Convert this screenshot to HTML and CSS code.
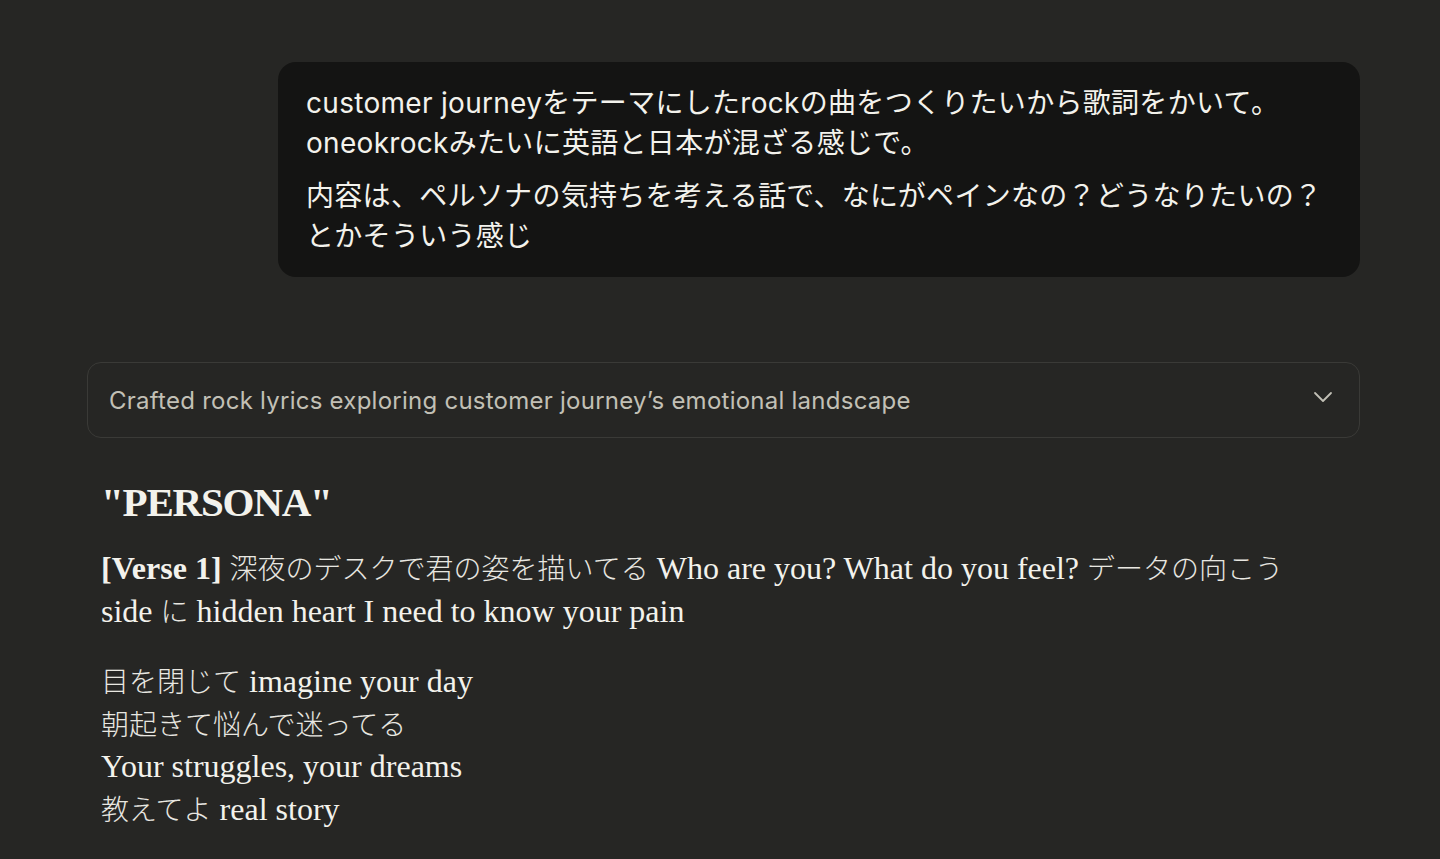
FILE: index.html
```html
<!DOCTYPE html>
<html lang="ja">
<head>
<meta charset="utf-8">
<title>PERSONA</title>
<link rel="stylesheet" href="styles.css">
</head>
<body>
<main class="thread">
  <div class="user-row">
    <div class="bubble">
      <p>customer journeyをテーマにしたrockの曲をつくりたいから歌詞をかいて。<br>oneokrockみたいに英語と日本が混ざる感じで。</p>
      <p>内容は、ペルソナの気持ちを考える話で、なにがペインなの？どうなりたいの？とかそういう感じ</p>
    </div>
  </div>

  <div class="summary">
    <span class="summary-text">Crafted rock lyrics exploring customer journey’s emotional landscape</span>
    <svg class="chevron" width="20" height="12" viewBox="0 0 20 12" aria-hidden="true">
      <path d="M2 2 L10 10 L18 2" fill="none" stroke="#c2c0b6" stroke-width="1.8" stroke-linecap="round" stroke-linejoin="round"/>
    </svg>
  </div>

  <article class="response">
    <h1 class="title">"PERSONA"</h1>
    <p class="lyric"><strong>[Verse 1]</strong> <span class="ja">深夜のデスクで君の姿を描いてる</span> Who are you? What do you feel? <span class="ja">データの向こう</span> side <span class="ja">に</span> hidden heart I need to know your pain</p>
    <p class="lyric"><span class="ja">目を閉じて</span> imagine your day<br><span class="ja">朝起きて悩んで迷ってる</span><br>Your struggles, your dreams<br><span class="ja">教えてよ</span> real story</p>
  </article>
</main>
</body>
</html>
```

FILE: styles.css
```css
html, body {
  margin: 0;
  padding: 0;
  background: #262624;
  height: 100%;
  overflow: hidden;
}

.thread {
  width: 1273px;
  margin-left: 87px;
  padding-top: 62px;
  box-sizing: border-box;
}

.user-row {
  display: flex;
  justify-content: flex-end;
}

.bubble {
  max-width: 85%;
  box-sizing: border-box;
  width: 1082px;
  background: #141413;
  border-radius: 18px;
  padding: 21px 28px 21px 28px;
  color: #f3f2ec;
  font-family: "Inter", "Noto Sans CJK JP", sans-serif;
  font-size: 28px;
  line-height: 40px;
  letter-spacing: 0.3px;
}

.bubble p {
  margin: 0;
}

.bubble p + p {
  margin-top: 13px;
}

.summary {
  margin-top: 85px;
  height: 76px;
  box-sizing: border-box;
  border: 1px solid #3a3a37;
  border-radius: 14px;
  padding: 0 26px 0 21px;
  display: flex;
  align-items: center;
  justify-content: space-between;
}

.summary-text {
  color: #c2c0b6;
  font-family: "Inter", "Noto Sans CJK JP", sans-serif;
  font-size: 24px;
  letter-spacing: 0.25px;
}

.chevron {
  display: block;
  margin-top: -6px;
}

.response {
  padding: 0 40px 0 14px;
  color: #f3f2ec;
  font-family: "Liberation Serif", "Noto Sans CJK JP", serif;
}

.title {
  margin: 39px 0 20px;
  font-size: 41px;
  line-height: 50px;
  font-weight: 700;
  letter-spacing: -1.2px;
}

.lyric {
  margin: 0 0 28px;
  font-size: 32px;
  line-height: 42.5px;
}

.lyric strong {
  font-weight: 700;
}

.ja {
  font-family: "Noto Sans CJK JP", sans-serif;
  font-size: 28px;
  line-height: 1;
  font-weight: 300;
  color: #e8e7e1;
}
```
